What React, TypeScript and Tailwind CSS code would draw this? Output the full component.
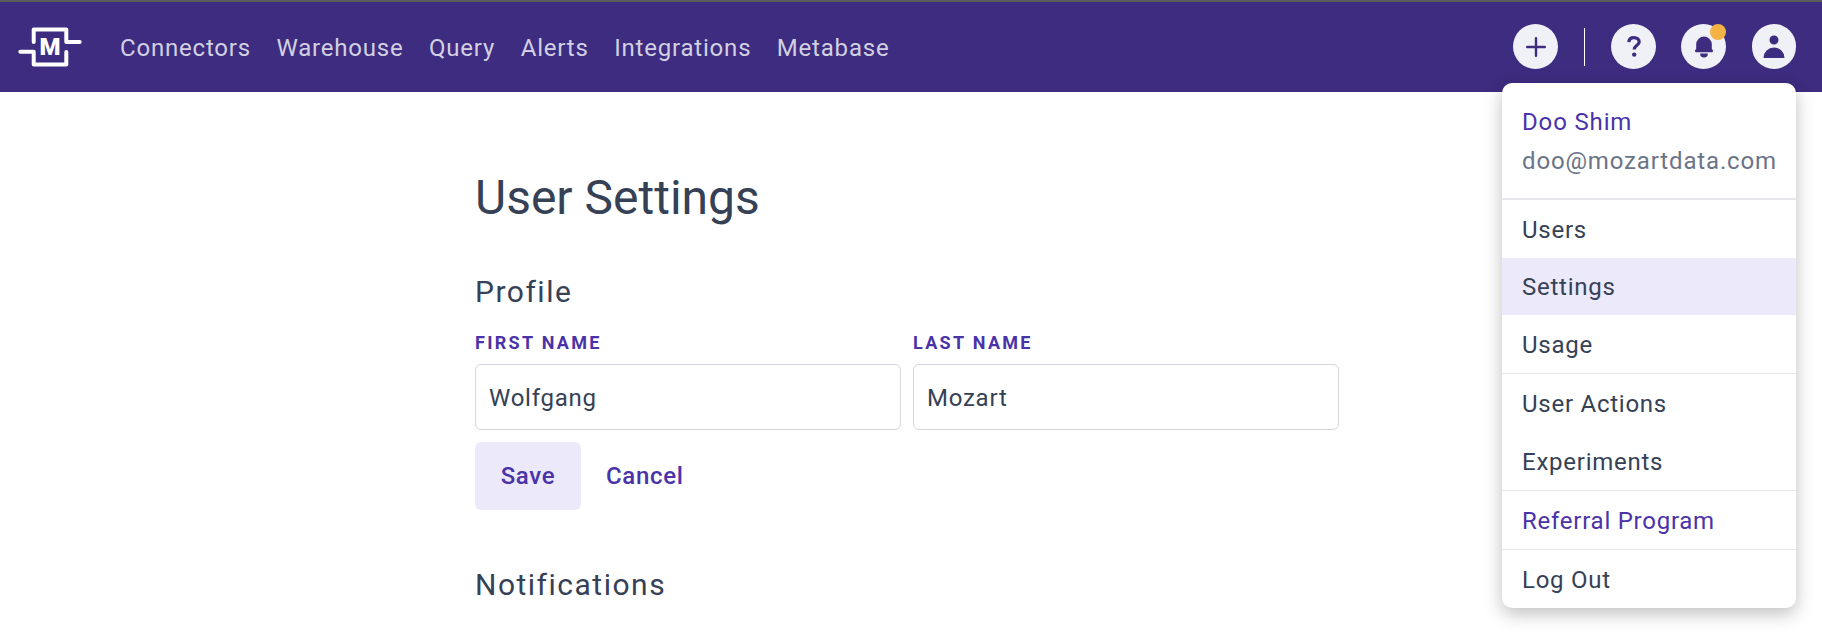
import { HiBell, HiUser } from 'react-icons/hi';

const navLinks = ['Connectors', 'Warehouse', 'Query', 'Alerts', 'Integrations', 'Metabase'];

const Logo = () => (
  <svg width="64" height="40" viewBox="0 0 64 40" fill="none" aria-hidden="true">
    <path
      d="M2.3 24.7H15.7V37.5H48.3V25M15.7 15V2.5H48.3V15H61.7"
      stroke="white"
      strokeWidth="4"
      strokeLinecap="round"
      strokeLinejoin="round"
    />
    <text x="32" y="28" textAnchor="middle" fill="white" fontSize="24" fontWeight="900" fontFamily="Roboto, sans-serif">
      M
    </text>
  </svg>
);

const PlusIcon = () => (
  <svg width="20" height="20" viewBox="0 0 20 20" fill="none" stroke="currentColor" strokeWidth="2.4" strokeLinecap="round">
    <path d="M10 1.2V18.8M1.2 10H18.8" />
  </svg>
);

const QuestionIcon = () => (
  <svg width="14" height="21" viewBox="0 0 14 21" fill="none">
    <path d="M1.8 6.2C2 3.3 4.2 1.7 7 1.7C10 1.7 12.2 3.4 12.2 5.9C12.2 9.2 7.2 9.4 7.2 13.6" stroke="currentColor" strokeWidth="3.2" />
    <circle cx="7.2" cy="18.6" r="2.2" fill="currentColor" />
  </svg>
);

const IconCircle = ({ children, className = 'w-[45px] h-[45px]' }: { children: React.ReactNode; className?: string }) => (
  <div className={`flex items-center justify-center rounded-full bg-[#f0f0f7] text-[#3d2c7f] ${className}`}>{children}</div>
);

const Field = ({ label, value }: { label: string; value: string }) => (
  <div className="flex-1">
    <label className="block text-[18px] leading-[20px] font-bold tracking-[2.3px] uppercase text-[#4a33a8]">{label}</label>
    <div className="mt-[11px] flex h-[66px] items-center rounded-[6px] border border-[#d3d5e0] bg-white px-[13px] pt-px text-[24px] text-[#364156] tracking-[0.75px]">
      {value}
    </div>
  </div>
);

const MenuItem = ({ children, active, accent, className = 'h-[58px]' }: { children: React.ReactNode; active?: boolean; accent?: boolean; className?: string }) => (
  <div
    className={`flex items-center px-[20px] pt-px text-[24px] tracking-[0.75px] ${className} ${active ? 'bg-[#ebe9fa]' : ''} ${
      accent ? 'text-[#4a33a8]' : 'text-[#364156]'
    }`}
  >
    {children}
  </div>
);

const AccountMenu = () => (
  <div className="absolute left-[1502px] top-[83px] w-[294px] overflow-hidden rounded-[10px] bg-white shadow-[0_6px_18px_rgba(0,0,0,0.25)]">
    <div className="flex h-[117px] flex-col border-b-2 border-[#e5e7eb] px-[20px] pt-[20px] text-[24px] leading-[39px] tracking-[0.85px]">
      <span className="text-[#4a33a8]">Doo Shim</span>
      <span className="text-[#6b7488]">doo@mozartdata.com</span>
    </div>
    <MenuItem>Users</MenuItem>
    <MenuItem active className="h-[57px]">
      Settings
    </MenuItem>
    <MenuItem>Usage</MenuItem>
    <div className="border-t border-[#e5e7eb]">
      <MenuItem>User Actions</MenuItem>
      <MenuItem>Experiments</MenuItem>
    </div>
    <div className="border-t border-[#e5e7eb]">
      <MenuItem accent>Referral Program</MenuItem>
    </div>
    <div className="border-t border-[#e5e7eb]">
      <MenuItem>Log Out</MenuItem>
    </div>
  </div>
);

export default function App() {
  return (
    <div className="relative h-[634px] overflow-hidden bg-white font-['Roboto',sans-serif]">
      <div className="h-[2px] bg-[#5c5c5c]" />
      <nav className="flex h-[90px] items-center bg-[#3d2c7f] pl-[18px] pr-[26px]">
        <Logo />
        <div className="ml-[38px] mt-[1px] flex gap-[25.5px] text-[24px] tracking-[0.8px] text-[#d2d0e2]">
          {navLinks.map((link) => (
            <a key={link}>{link}</a>
          ))}
        </div>
        <div className="ml-auto mb-px flex items-center">
          <IconCircle>
            <PlusIcon />
          </IconCircle>
          <div className="mx-[26px] h-[38px] w-px bg-white" />
          <IconCircle>
            <QuestionIcon />
          </IconCircle>
          <div className="relative ml-[25px]">
            <IconCircle>
              <HiBell size={26} />
            </IconCircle>
            <span className="absolute right-0 top-0 h-4 w-4 rounded-full bg-[#f4b244]" />
          </div>
          <div className="ml-[26px] -mt-[1px]">
            <IconCircle className="w-[44px] h-[45px]">
              <HiUser size={30} />
            </IconCircle>
          </div>
        </div>
      </nav>
      <main className="ml-[475px] w-[864px] pt-[79px] text-[#364156]">
        <h1 className="text-[48px] leading-[54px]">User Settings</h1>
        <h2 className="mt-[49px] text-[30px] leading-[36px] tracking-[1.5px]">Profile</h2>
        <div className="mt-[23px] flex gap-[12px]">
          <Field label="First Name" value="Wolfgang" />
          <Field label="Last Name" value="Mozart" />
        </div>
        <div className="mt-[12px] flex items-center">
          <button className="h-[68px] w-[106px] rounded-[6px] bg-[#ebe9fa] text-[24px] tracking-[0.7px] font-medium text-[#4a33a8]">Save</button>
          <button className="ml-[25px] text-[24px] tracking-[0.7px] font-medium text-[#4a33a8]">Cancel</button>
        </div>
        <h2 className="mt-[57px] text-[30px] leading-[36px] tracking-[1.5px]">Notifications</h2>
      </main>
      <AccountMenu />
    </div>
  );
}
